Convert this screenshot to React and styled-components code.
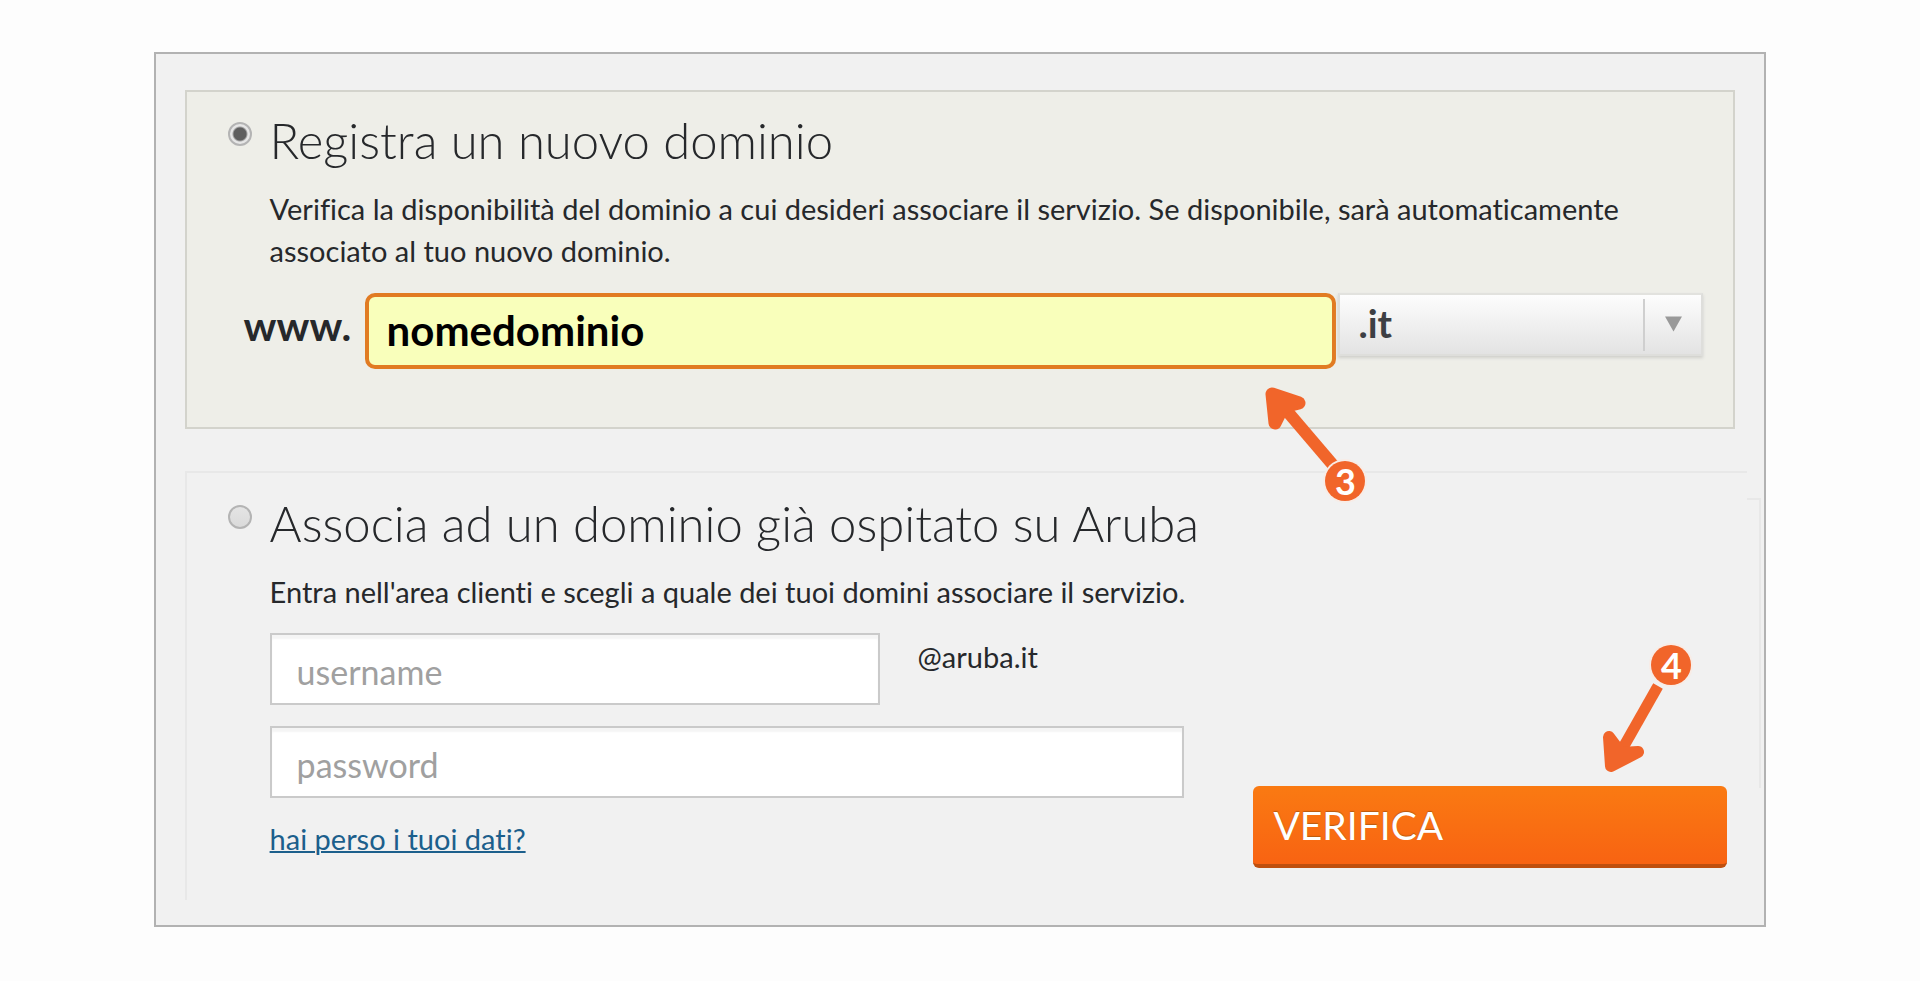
import { useState } from "react";
import styled, { createGlobalStyle } from "styled-components";

export default function App() {
  const [choice, setChoice] = useState("new");
  const [domain, setDomain] = useState("nomedominio");

  return (
    <Page>
      <GlobalStyle />
      <Frame onSubmit={(e) => e.preventDefault()}>
        <NewDomain>
          <OptionTitle>
            <Radio id="new" name="choice" checked={choice === "new"} onChange={() => setChoice("new")} />
            <Title><label htmlFor="new">Registra un nuovo dominio</label></Title>
          </OptionTitle>
          <Text>
            Verifica la disponibilità del dominio a cui desideri associare il servizio. Se disponibile, sarà automaticamente associato al tuo nuovo dominio.
          </Text>
          <DomainRow>
            <Www htmlFor="domain">www.</Www>
            <DomainInput id="domain" value={domain} onChange={(e) => setDomain(e.target.value)} />
            <SelectBox>
              <Select aria-label="Estensione" defaultValue=".it">
                <option>.it</option>
                <option>.com</option>
                <option>.net</option>
                <option>.eu</option>
              </Select>
              <SelectArrow viewBox="0 0 18 16" aria-hidden="true">
                <path d="M0 0h18l-9 16z" fill="#999" />
              </SelectArrow>
            </SelectBox>
          </DomainRow>
          <PinThree>
            <PinArrow viewBox="0 0 110 120" aria-hidden="true">
              <path d="M18 23L70 84" strokeWidth="12" />
              <path d="M9 13L12 42L20 26L36 22Z" strokeWidth="13" fill="#f1652a" />
            </PinArrow>
            <PinNumber>3</PinNumber>
          </PinThree>
        </NewDomain>

        <HostedDomain>
          <HostedMain>
            <OptionTitle>
              <Radio id="hosted" name="choice" checked={choice === "hosted"} onChange={() => setChoice("hosted")} />
              <Title><label htmlFor="hosted">Associa ad un dominio già ospitato su Aruba</label></Title>
            </OptionTitle>
            <Text>Entra nell'area clienti e scegli a quale dei tuoi domini associare il servizio.</Text>
            <LoginRow>
              <Login>
                <UserRow>
                  <Field aria-label="username" placeholder="username" />
                  <Host>@aruba.it</Host>
                </UserRow>
                <Field type="password" aria-label="password" placeholder="password" />
                <Link href="#">hai perso i tuoi dati?</Link>
              </Login>
              <Verify type="submit">VERIFICA</Verify>
            </LoginRow>
          </HostedMain>
          <HostedEdge />
          <PinFour>
            <PinArrow viewBox="0 0 110 130" aria-hidden="true">
              <path d="M57 41L19 108" strokeWidth="11" />
              <path d="M8 92L10 121L37 107L20 108Z" strokeWidth="12" fill="#f1652a" />
            </PinArrow>
            <PinNumber>4</PinNumber>
          </PinFour>
        </HostedDomain>
      </Frame>
    </Page>
  );
}

const GlobalStyle = createGlobalStyle`
  * {
    box-sizing: border-box;
  }

  body {
    margin: 0;
    background-color: #fdfdfd;
    color: #26282b;
    font-family: Lato, "Open Sans", sans-serif;
    font-variant-ligatures: none;
  }

  input, select, button {
    font-family: inherit;
  }
`;

const Page = styled.main`
  padding: 52px 8%;
`;

const Frame = styled.form`
  padding: 36px 29px 25px;
  border: 2px solid #b2b2b2;
  background-color: #f1f1f1;
`;

const NewDomain = styled.section`
  position: relative;
  z-index: 1;
  margin-bottom: 42px;
  padding: 20px 30px 58px 41px;
  border: 2px solid #d3d3cc;
  background-color: #eeeee8;
`;

const OptionTitle = styled.div`
  display: flex;
  align-items: flex-start;
  gap: 18px;
`;

const Radio = styled.input.attrs({ type: "radio" })`
  appearance: none;
  flex: none;
  width: 24px;
  height: 24px;
  margin: 10px 0 0;
  border: 2px solid #b4b4b4;
  border-radius: 50%;
  background: linear-gradient(#e4e4e4, #dadada);

  &:checked {
    background: radial-gradient(circle, #5e5e5e 6px, #e6e6e6 8px);
  }
`;

const Title = styled.h2`
  margin: 0;
  font-size: 49px;
  font-weight: 300;
  line-height: 56px;
`;

const Text = styled.p`
  margin: 20px 0 0 42px;
  font-size: 29px;
  line-height: 42px;
`;

const DomainRow = styled.div`
  display: flex;
  align-items: flex-start;
  margin: 21px 0 0 16px;
`;

const Www = styled.label`
  width: 121px;
  font-size: 41px;
  font-weight: 700;
  line-height: 66px;
`;

const DomainInput = styled.input`
  flex: 1;
  min-width: 0;
  height: 76px;
  padding: 0 18px 2px;
  border: 4px solid #e17b22;
  border-radius: 10px;
  outline: none;
  background-color: #f9ffbb;
  color: #000;
  font-size: 42px;
  font-weight: 700;
`;

const SelectBox = styled.div`
  display: grid;
  grid-template-columns: 1fr 60px;
  align-items: center;
  width: 365px;
  margin-left: 2px;
`;

const Select = styled.select`
  appearance: none;
  grid-area: 1 / 1 / 2 / 3;
  height: 63px;
  padding: 0 18px 4px;
  border: 2px solid #dededb;
  border-top-color: #e2e2de;
  background: linear-gradient(#fdfdfd, #e3e3e3);
  box-shadow: 0 2px 3px #d0d0cc;
  color: #3d3f44;
  font-size: 39px;
  font-weight: 700;
`;

const SelectArrow = styled.svg`
  grid-area: 1 / 2;
  width: 59px;
  height: 52px;
  padding: 17px 20px 19px;
  border-left: 2px solid #cfcfcf;
  pointer-events: none;
`;

const HostedDomain = styled.section`
  position: relative;
  display: flex;
  margin-right: -26px;
`;

const HostedMain = styled.div`
  flex: 1;
  padding: 22px 20px 32px 41px;
  border: solid #e8e8e8;
  border-width: 2px 0 0 2px;
`;

// lighter right border, detached from the top one
const HostedEdge = styled.div`
  width: 14px;
  height: 290px;
  margin-top: 27px;
  border: solid #e8e8e8;
  border-width: 2px 2px 0 0;
`;

const LoginRow = styled.div`
  display: flex;
  align-items: flex-end;
  justify-content: space-between;
  margin: 20px 0 0 42px;
`;

const Login = styled.div`
  display: flex;
  flex-direction: column;
  align-items: flex-start;
  width: 914px;
  padding-bottom: 8px;
`;

const UserRow = styled.div`
  display: flex;
  width: 100%;
  gap: 38px;
  margin-bottom: 21px;

  input {
    flex: none;
    width: 610px;
  }
`;

const Field = styled.input`
  width: 100%;
  height: 72px;
  padding: 4px 25px 0;
  border: 2px solid #cacaca;
  background-color: #fff;
  box-shadow: inset 0 4px 2px #f5f5f5;
  color: #26282b;
  font-size: 34px;

  &::placeholder {
    color: #a0a0a0;
  }
`;

const Host = styled.span`
  padding-top: 3px;
  font-size: 29px;
  line-height: 42px;
`;

const Link = styled.a`
  margin-top: 20px;
  color: #1c5f8c;
  font-size: 29px;
  line-height: 42px;
  text-decoration-thickness: 2px;
`;

const Verify = styled.button`
  width: 474px;
  height: 82px;
  padding: 0 20px;
  border: 0;
  border-bottom: 4px solid #bf4f0e;
  border-radius: 6px;
  background: linear-gradient(#fa7a12, #f86312);
  color: #fff;
  font-size: 39px;
  text-align: left;
  text-shadow: 0 -1px 1px #b85a10;
  cursor: pointer;
`;

const Pin = styled.div`
  position: absolute;
  width: 110px;
  color: #fff;
  pointer-events: none;
`;

const PinThree = styled(Pin)`
  right: 360px;
  bottom: -74px;
  height: 120px;
  padding: 80px 0 0 62px;
`;

const PinFour = styled(Pin)`
  right: 50px;
  top: 174px;
  height: 130px;
  padding-left: 50px;
`;

const PinArrow = styled.svg`
  position: absolute;
  inset: 0;
  stroke: #f1652a;
  stroke-linejoin: round;
`;

const PinNumber = styled.span`
  position: relative;
  display: grid;
  place-items: center;
  width: 40px;
  height: 40px;
  border-radius: 50%;
  background-color: #f1652a;
  box-shadow: 0 0 0 2px #f8ece6;
  font-size: 36px;
  font-weight: 700;
  line-height: 40px;
`;
